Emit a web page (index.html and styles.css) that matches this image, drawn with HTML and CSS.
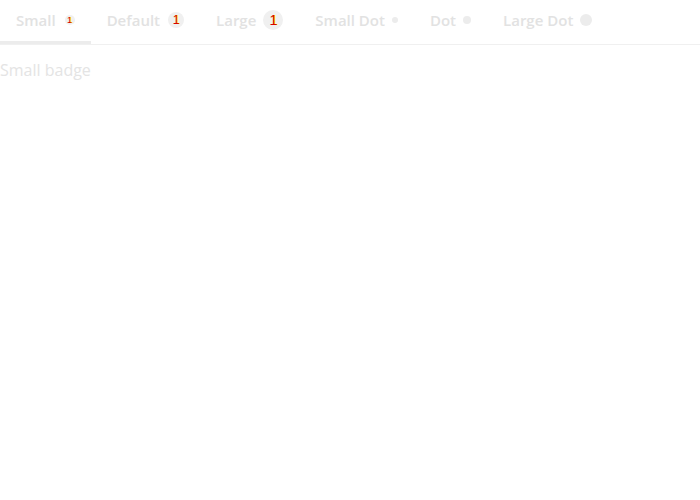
FILE: index.html
```html
<!DOCTYPE html>
<html>
<head>
<meta charset="utf-8">
<link rel="stylesheet" href="styles.css">
</head>
<body>
<div class="tabs">
  <div class="tab active"><span class="label">Small</span><span class="badge b-small">1</span></div>
  <div class="tab tab-default"><span class="label">Default</span><span class="badge b-default">1</span></div>
  <div class="tab tab-large"><span class="label">Large</span><span class="badge b-large">1</span></div>
  <div class="tab tab-dot"><span class="label">Small Dot</span><span class="dot d-small"></span></div>
  <div class="tab tab-dot"><span class="label">Dot</span><span class="dot d-default"></span></div>
  <div class="tab tab-dot"><span class="label">Large Dot</span><span class="dot d-large"></span></div>
</div>
<div class="content">Small badge</div>
</body>
</html>
```
FILE: styles.css
```css
html, body { margin: 0; padding: 0; background: #fff; }
body { font-family: "Open Sans", sans-serif; }
.tabs {
  display: flex;
  height: 44px;
  border-bottom: 1px solid #f0f0f0;
}
.tab {
  display: flex;
  align-items: center;
  gap: 9px;
  padding: 0 16px 4px;
  height: 44px;
  box-sizing: border-box;
  font-size: 15px;
  font-weight: 600;
  color: #e2e2e2;
  position: relative;
}
.tab-default { gap: 8px; }
.tab-large { gap: 7px; }
.tab-dot { gap: 7px; }
.tab.active::after {
  content: "";
  position: absolute;
  left: 0; right: 0; bottom: 0;
  height: 3px;
  background: #ececec;
}
.badge {
  display: inline-flex;
  align-items: center;
  justify-content: center;
  border-radius: 50%;
  background: #f0f0f0;
  font-family: "Liberation Sans Narrow", "Liberation Sans", sans-serif;
  color: #d80000;
  text-shadow: 1px 0 0 #ffee00;
  font-weight: 400;
}
.b-small { width: 10px; height: 10px; font-size: 9px; }
.b-default { width: 16px; height: 16px; font-size: 12px; }
.b-large { width: 20px; height: 20px; font-size: 14px; }
.dot { display: inline-block; border-radius: 50%; background: #ececec; }
.d-small { width: 6px; height: 6px; }
.d-default { width: 8px; height: 8px; }
.d-large { width: 12px; height: 12px; }
.content {
  font-size: 16px;
  color: #e4e4e4;
  line-height: 1.5;
  padding-top: 13px;
}
```
